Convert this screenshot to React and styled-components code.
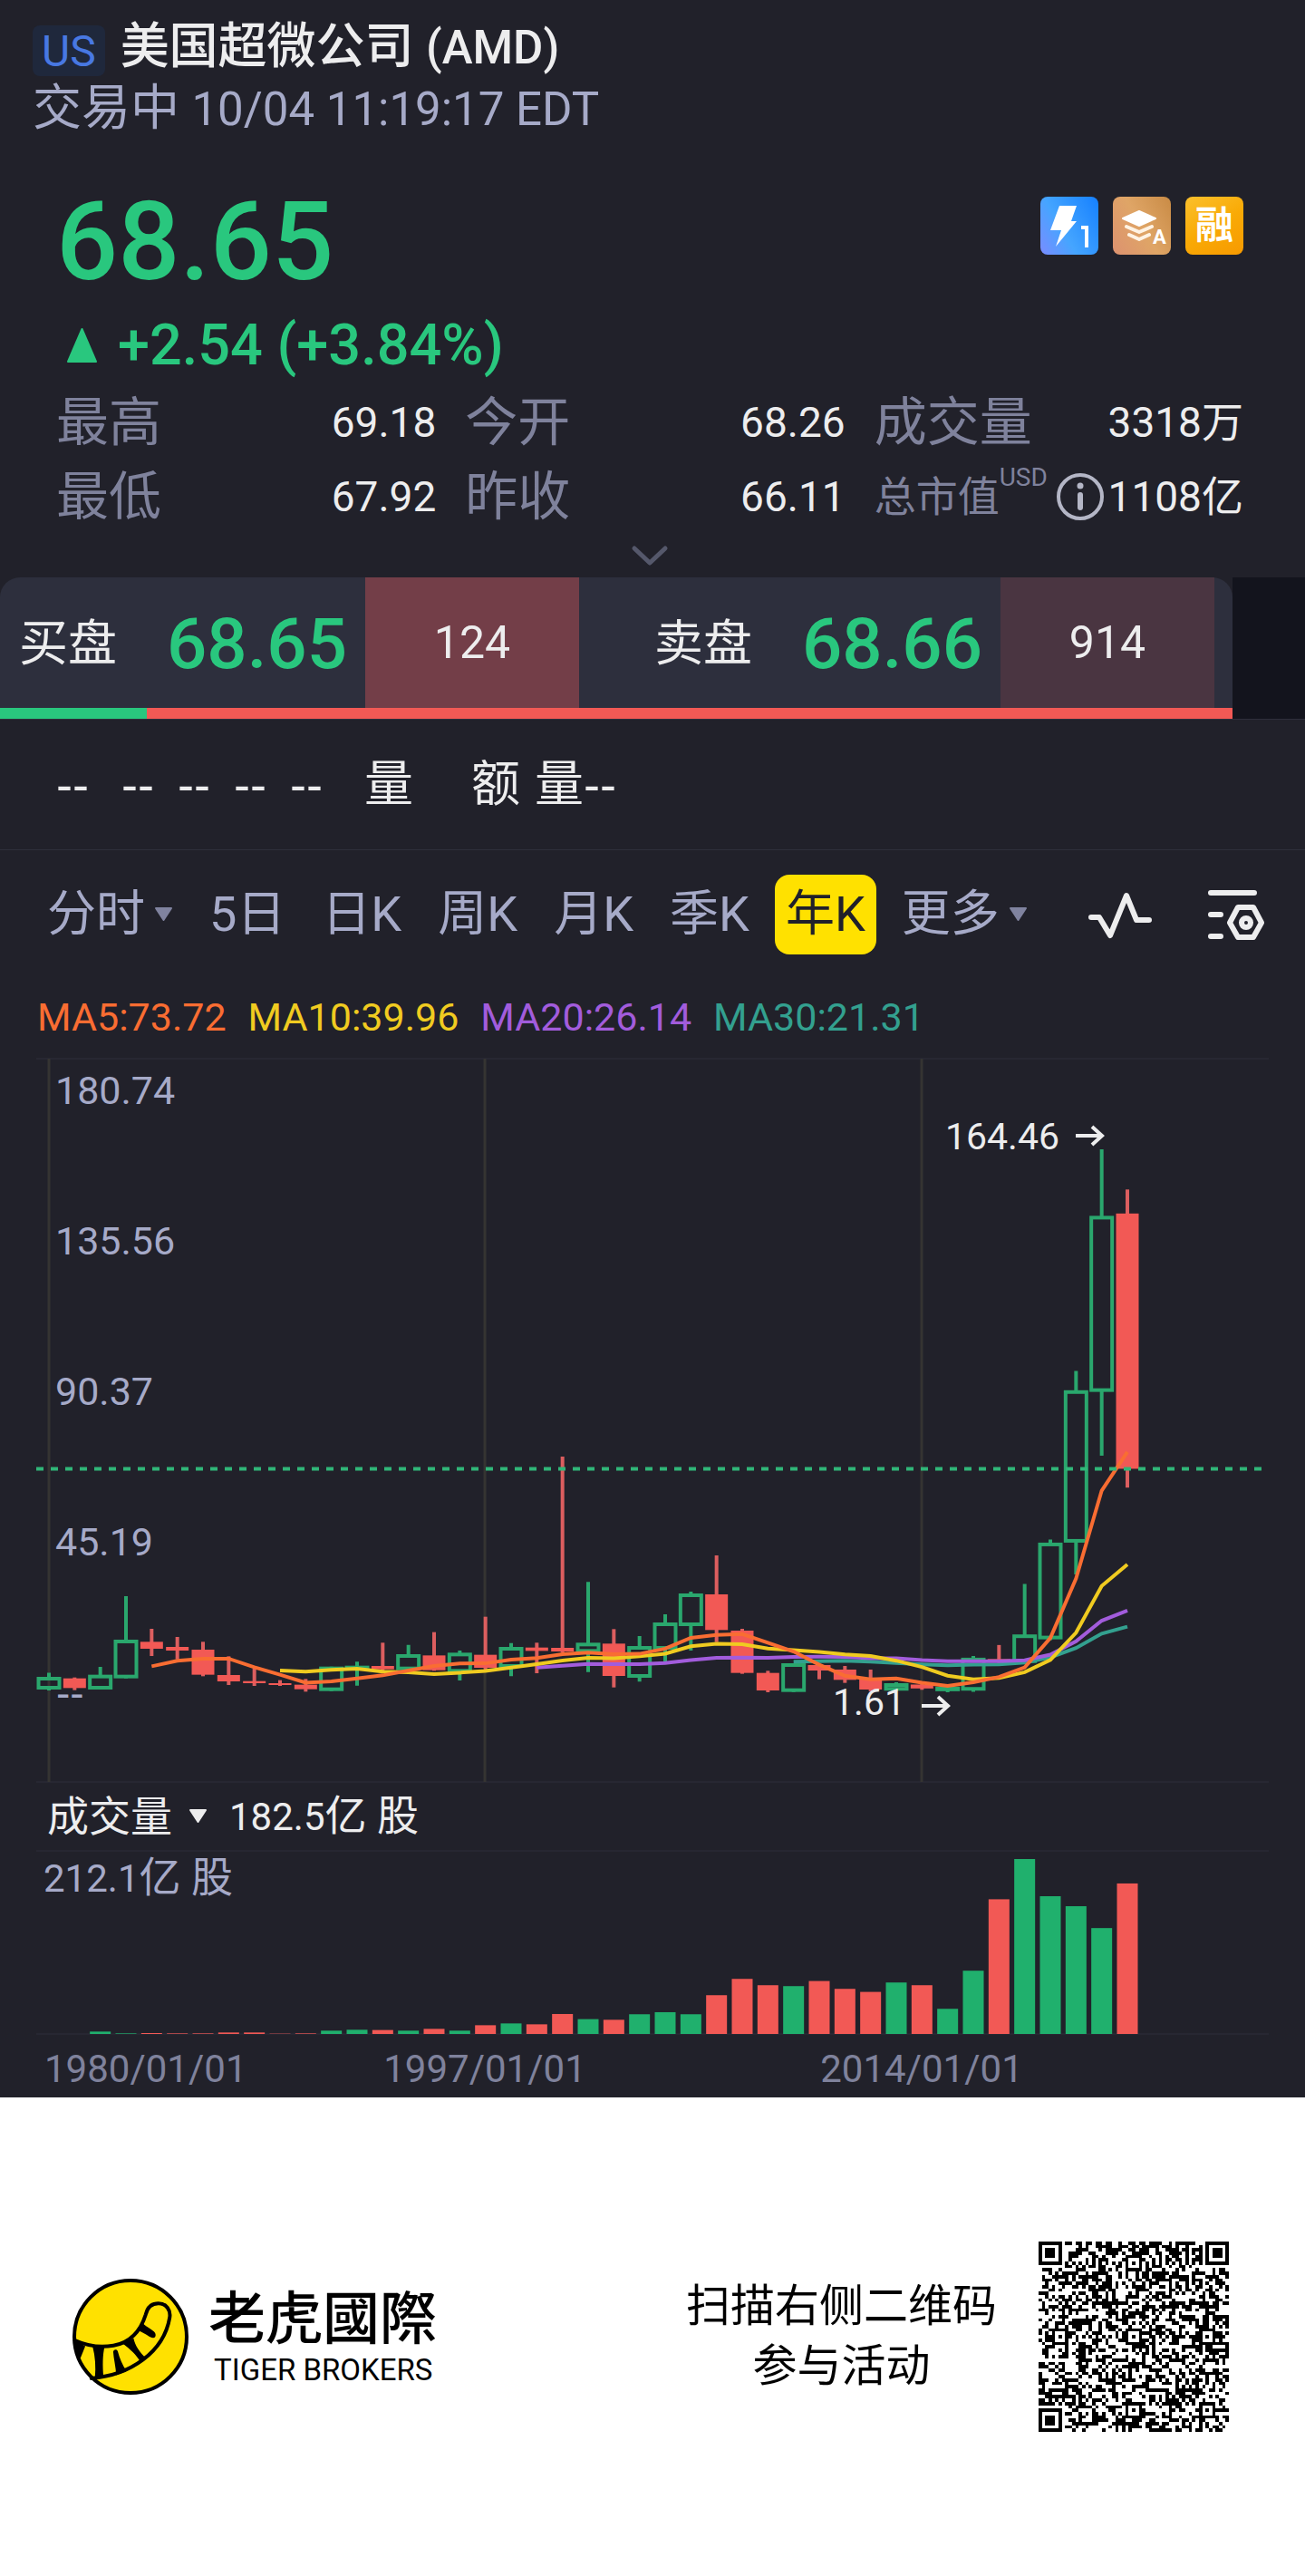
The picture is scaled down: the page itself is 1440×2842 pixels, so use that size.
import React, { useState } from "react";
import styled, { createGlobalStyle } from "styled-components";

const colors = {
  background: "#21212a",
  panel: "#2d2f3d",
  void: "#13141d",
  line: "#2e2f3b",
  grid: "#353432",
  text: "#ededee",
  muted: "#a6aac8",
  label: "#7f829c",
  up: "#29c77e",
  candleUp: "#2aa76d",
  volumeUp: "#20b06d",
  down: "#f25955",
  yellow: "#ffe100",
  ma5: "#f96d32",
  ma10: "#f0cb20",
  ma20: "#a25cdc",
  ma30: "#33a08f",
};

const fontStack = `Roboto, "Noto Sans CJK SC", sans-serif`;

const GlobalStyle = createGlobalStyle`
  *, *::before, *::after {
    box-sizing: border-box;
  }
  body {
    margin: 0;
    background: #fff;
    font-family: ${fontStack};
  }
  button {
    margin: 0;
    padding: 0;
    border: 0;
    background: none;
    color: inherit;
    font: inherit;
    cursor: pointer;
  }
  svg {
    display: block;
  }
`;

const Screen = styled.main`
  background: ${colors.background};
  color: ${colors.text};
`;

/* ---------- header ---------- */

const Header = styled.header`
  padding: 16px 36px 0;
`;

const TitleRow = styled.div`
  display: flex;
  align-items: center;
  gap: 17px;
  height: 72px;
`;

const Market = styled.span`
  padding: 2px 10px 0;
  margin-top: 8px;
  border-radius: 8px;
  background: #1f283c;
  color: #4878e2;
  font-size: 48px;
  line-height: 54px;
`;

const Title = styled.h1`
  margin: 0;
  font-size: 54px;
  font-weight: 500;
  line-height: 72px;
`;

const Latin = styled.span`
  font-size: 51px;
`;

const Session = styled.p`
  margin: 0;
  color: ${colors.muted};
  font-size: 54px;
  line-height: 64px;
`;

/* ---------- quote ---------- */

const Quote = styled.section`
  padding: 54px 68px 0 62px;
`;

const PriceRow = styled.div`
  display: flex;
  justify-content: space-between;
  align-items: flex-start;
  color: ${colors.up};
`;

const Price = styled.strong`
  font-size: 120px;
  font-weight: 500;
  line-height: 120px;
`;

const Chips = styled.div`
  display: flex;
  gap: 16px;
  padding-top: 10px;
`;

const Chip = styled.span`
  display: flex;
  align-items: center;
  justify-content: center;
  width: 64px;
  height: 64px;
  border-radius: 8px;
  background: ${(props) => props.$fill};
  color: #fff;
  font-size: 42px;
  font-weight: 700;
  line-height: 64px;
`;

const Change = styled.p`
  display: flex;
  align-items: center;
  gap: 22px;
  margin: 18px 0 8px;
  padding-left: 11px;
  color: ${colors.up};
  font-size: 63px;
  font-weight: 500;
  line-height: 72px;
`;

const Stats = styled.dl`
  display: grid;
  grid-template-columns: 420fr 420fr 408fr;
  column-gap: 32px;
  margin: 0;
`;

const Stat = styled.div`
  display: flex;
  justify-content: space-between;
  line-height: 82px;
  white-space: nowrap;
`;

const StatLabel = styled.dt`
  display: flex;
  color: ${colors.label};
  font-size: ${(props) => (props.$small ? 46 : 58)}px;
`;

const Unit = styled.sup`
  font-size: 28px;
  line-height: 40px;
`;

const StatValue = styled.dd`
  display: flex;
  align-items: center;
  gap: 4px;
  margin: 0;
  font-size: 46px;
`;

const Expand = styled.button`
  display: block;
  width: 100%;
  padding: 12px 0;
  svg {
    margin: 0 auto;
  }
`;

/* ---------- bid / ask ---------- */

const Depth = styled.section`
  display: flex;
  background: ${colors.void};
  border-bottom: 1px solid ${colors.line};
`;

const DepthMain = styled.div`
  flex: 1;
  background: ${colors.background};
`;

const DepthEnd = styled.div`
  width: 80px;
`;

const DepthRow = styled.div`
  display: flex;
  gap: 62px;
  padding-right: 20px;
  border-radius: 22px 22px 0 0;
  background: ${colors.panel};
`;

const Side = styled.div`
  display: flex;
  flex: 1;
  justify-content: space-between;
  height: 144px;
  padding-left: 21px;
  font-size: 54px;
  line-height: 148px;
`;

const SidePrice = styled.span`
  margin-left: auto;
  padding-right: 20px;
  color: ${colors.up};
  font-size: 78px;
  font-weight: 500;
`;

const SideSize = styled.span`
  width: 236px;
  background: ${(props) => props.$fill};
  font-size: 50px;
  line-height: 144px;
  text-align: center;
`;

const Ratio = styled.div`
  height: 12px;
  background: ${colors.down};
`;

const RatioBid = styled.div`
  height: 12px;
  background: ${colors.up};
`;

const Summary = styled.section`
  display: flex;
  align-items: center;
  padding: 0 62px;
  border-bottom: 1px solid ${colors.line};
  font-size: 54px;
  line-height: 143px;
`;

const Dash = styled.span`
  min-width: 40px;
  font-family: "Liberation Sans", sans-serif;
`;

const DashGroup = styled.span`
  display: flex;
  gap: 22px;
  padding: 0 42px 0 32px;
`;

const Word = styled.span`
  padding-right: ${(props) => props.$gap || 0}px;
`;

/* ---------- toolbar ---------- */

const Toolbar = styled.nav`
  display: flex;
  align-items: center;
  gap: 16px;
  padding: 27px 44px 24px 40px;
  color: ${colors.muted};
`;

const Tab = styled.button`
  display: flex;
  align-items: center;
  gap: 10px;
  padding: 0 12px;
  border-radius: 16px;
  background: ${(props) => (props.$active ? colors.yellow : "none")};
  color: ${(props) => (props.$active ? "#20202a" : colors.muted)};
  font-size: 54px;
  line-height: 88px;
  white-space: nowrap;
`;

const Tools = styled.div`
  display: flex;
  gap: 60px;
  margin-left: auto;
`;

/* ---------- charts ---------- */

const Averages = styled.div`
  display: flex;
  gap: 24px;
  padding-left: 41px;
  font-size: 43px;
  line-height: 90px;
`;

const Average = styled.span`
  color: ${(props) => props.$color};
`;

const Chart = styled.svg`
  width: 100%;
  height: auto;
  font-family: ${fontStack};
  font-size: 43px;
`;

const VolumeHead = styled.div`
  display: flex;
  align-items: center;
  gap: 24px;
  padding-left: 52px;
  font-size: 46px;
  line-height: 72px;
`;

const VolumePick = styled.button`
  display: flex;
  align-items: center;
  gap: 18px;
`;

const Small = styled.span`
  font-size: 42px;
`;

/* ---------- footer ---------- */

const Footer = styled.footer`
  display: flex;
  align-items: center;
  justify-content: space-between;
  padding: 159px 84px 160px 80px;
  background: #fff;
  color: #000;
`;

const Brand = styled.div`
  display: flex;
  align-items: center;
  gap: 22px;
`;

const BrandText = styled.div`
  display: flex;
  flex-direction: column;
  gap: 2px;
  padding-top: 6px;
`;

const BrandName = styled.div`
  font-family: Roboto, "Noto Sans CJK TC", sans-serif;
  font-size: 63px;
  font-weight: 500;
  line-height: 66px;
`;

const BrandLatin = styled.div`
  padding-left: 6px;
  font-size: 33px;
  line-height: 42px;
`;

const Invite = styled.div`
  display: flex;
  align-items: center;
  gap: 46px;
`;

const InviteText = styled.p`
  margin: 0;
  font-size: 49px;
  line-height: 66px;
  text-align: center;
`;

/* ---------- data ---------- */

// [direction, body top, body bottom, high, low, volume]
const candles = [
  ["up", 6.25, 2.45, 7.5, 2.17, 0],
  ["down", 5.8, 2.9, 6.07, 2.27, 0],
  ["up", 6.89, 2.45, 9.24, 2.45, 2.9],
  ["up", 17.4, 5.8, 30.44, 5.8, 0.7],
  ["down", 16.76, 14.68, 20.66, 12.5, 1.1],
  ["down", 15.22, 14.13, 18.21, 11.5, 0.7],
  ["down", 14.4, 6.89, 16.76, 6.43, 0.7],
  ["down", 6.8, 4.89, 12.41, 3.81, 1.8],
  ["down", 4.98, 4.35, 8.79, 3.53, 1.8],
  ["down", 4.35, 3.81, 5.26, 3.53, 0.4],
  ["down", 3.9, 2.54, 5.62, 1.81, 0.7],
  ["up", 9.33, 1.99, 9.33, 1.99, 4],
  ["up", 9.6, 8.6, 10.78, 3.62, 5.1],
  ["down", 9.51, 8.52, 16.49, 8.06, 4.8],
  ["up", 13.05, 8.24, 15.86, 8.06, 4],
  ["down", 12.68, 8.24, 19.66, 8.06, 6.2],
  ["up", 13.5, 7.52, 14.13, 5.16, 4],
  ["down", 12.87, 8.97, 24.28, 8.06, 10.6],
  ["up", 15.22, 8.97, 16.4, 6.43, 12.8],
  ["down", 15.04, 14.04, 16.49, 7.34, 11.7],
  ["down", 14.95, 13.86, 72.3, 13.5, 24.2],
  ["up", 16.49, 13.5, 34.7, 7.7, 18],
  ["down", 16.22, 6.52, 20.57, 3.08, 17.2],
  ["up", 15.49, 5.98, 18.48, 4.8, 23.9],
  ["up", 22.56, 14.4, 25, 10.33, 26.4],
  ["up", 31.26, 21.47, 31.8, 14.13, 23.9],
  ["down", 30.99, 20.3, 42.67, 16.67, 47],
  ["down", 20.11, 7.43, 20.66, 7.16, 66.8],
  ["down", 7.43, 2.17, 8.06, 1.63, 59.1],
  ["up", 10.33, 1.72, 10.33, 1.72, 58],
  ["down", 9.79, 8.15, 9.79, 5.53, 64.2],
  ["down", 8.43, 5.35, 9.51, 4.44, 54.7],
  ["down", 5.8, 2.45, 8.43, 1.9, 51],
  ["up", 4.35, 2.11, 4.6, 1.98, 62.4],
  ["down", 3.95, 2.77, 4.1, 2.37, 59.1],
  ["up", 3.3, 2.3, 4.08, 1.61, 30.5],
  ["up", 11.99, 2.11, 12.5, 1.75, 76.7],
  ["down", 11.6, 10.67, 15.8, 10.4, 163.3],
  ["up", 18.97, 10.41, 34.12, 10.41, 212.1],
  ["up", 46.5, 17.5, 47.4, 17.26, 167],
  ["up", 92.2, 46.5, 98, 37, 154.9],
  ["up", 144.5, 91.7, 164.46, 72.6, 128.4],
  ["down", 145.2, 68.65, 152.4, 63, 182.5],
];

const averages = [
  {
    name: "MA30",
    value: "21.31",
    color: colors.ma30,
    points: [10.8, 10.95, 11.05, 10.8, 10.4, 10, 9.75, 9.9, 10, 10.5, 12.1, 14.9, 19.2, 21.31],
  },
  {
    name: "MA20",
    value: "26.14",
    color: colors.ma20,
    points: [
      9.05, 9.6, 10.15, 10.05, 10.05, 10.4, 11.25, 11.95, 12.05, 11.95, 12.25, 12.3, 12.25, 11.85,
      11.85, 11.3, 10.95, 10.95, 10.95, 11.2, 12.9, 16.9, 23.1, 26.14,
    ],
  },
  {
    name: "MA10",
    value: "39.96",
    color: colors.ma10,
    points: [
      8.15, 7.8, 8.35, 8.7, 7.8, 7.6, 7.05, 7.5, 8, 9.05, 10.05, 11.15, 11.95, 11.8, 12.4, 13.2,
      15.4, 16.2, 16.05, 14.75, 14.3, 13.7, 12.95, 12.5, 11.1, 9.2, 6.6, 5.5, 5.9, 7.65, 11.3,
      19.5, 33.5, 39.96,
    ],
  },
  {
    name: "MA5",
    value: "73.72",
    color: colors.ma5,
    points: [
      9.4, 11.05, 11.7, 11.7, 9.15, 6.9, 4.5, 4.9, 5.8, 6.7, 8.15, 9.5, 10.25, 10.3, 11.4, 11.9,
      13.05, 13.5, 13.05, 13.15, 14.7, 17.95, 18.85, 19.1, 16.5, 13.85, 9.9, 6.6, 5.5, 5.8, 4.5,
      3.55, 4.6, 6.2, 9.1, 17.9, 35.7, 62.1, 73.72,
    ],
  },
];

const priceLabels = ["180.74", "135.56", "90.37", "45.19"];

const stats = [
  { label: "最高", value: "69.18" },
  { label: "今开", value: "68.26" },
  { label: "成交量", value: "3318万" },
  { label: "最低", value: "67.92" },
  { label: "昨收", value: "66.11" },
  { label: "总市值", value: "1108亿", unit: "USD" },
];

const tabs = [
  { label: "分时", menu: true },
  { label: "5日" },
  { label: "日K" },
  { label: "周K" },
  { label: "月K" },
  { label: "季K" },
  { label: "年K" },
  { label: "更多", menu: true },
];

const candleX = (index) => 54 + (index * 1190) / 42;
const priceY = (price) => 706 - price * 3.679;

/* ---------- icons ---------- */

const Caret = ({ color }) => (
  <svg width="21" height="16" viewBox="0 0 21 16" aria-hidden="true">
    <path d="M2 1h17l-8.500 13z" fill={color} stroke={color} strokeWidth="2" strokeLinejoin="round" />
  </svg>
);

const UpIcon = () => (
  <svg width="35" height="40" viewBox="0 0 35 40" aria-hidden="true">
    <path d="M17.500 2L33 38H2z" fill={colors.up} stroke={colors.up} strokeWidth="2" strokeLinejoin="round" />
  </svg>
);

const InfoIcon = () => (
  <svg width="54" height="54" viewBox="0 0 54 54" aria-hidden="true">
    <circle cx="27" cy="27" r="24" fill="none" stroke="#b4b6c6" strokeWidth="4" />
    <circle cx="27" cy="15" r="3.500" fill="#b4b6c6" />
    <path d="M27 25v14" stroke="#b4b6c6" strokeWidth="6" strokeLinecap="round" />
  </svg>
);

const BoltIcon = () => (
  <svg width="64" height="64" viewBox="0 0 64 64" aria-hidden="true">
    <path d="M21 10h19l-6 17h6L17 55l6-18H11z" fill="#fff" />
    <path d="M45 34h6v22" fill="none" stroke="#fff" strokeWidth="4" />
  </svg>
);

const LayersIcon = () => (
  <svg width="64" height="64" viewBox="0 0 64 64" aria-hidden="true">
    <path d="M29 16l18 8-18 8-18-8z" fill="#fff" stroke="#fff" strokeWidth="2" strokeLinejoin="round" />
    <path d="M15 33l14 6 14-6M18 42l11 5 11-5" fill="none" stroke="#fff3e4" strokeWidth="4" strokeLinecap="round" strokeLinejoin="round" />
    <text x="44" y="52" fill="#fff" fontSize="22" fontWeight="700">
      A
    </text>
  </svg>
);

const WaveIcon = () => (
  <svg width="72" height="60" viewBox="0 0 72 60" aria-hidden="true">
    <path
      d="M4 33h9l12 20L43 9l11 27h14"
      fill="none"
      stroke={colors.text}
      strokeWidth="6"
      strokeLinecap="round"
      strokeLinejoin="round"
    />
  </svg>
);

const SettingsIcon = () => (
  <svg width="64" height="60" viewBox="0 0 64 60" aria-hidden="true">
    <g fill="none" stroke={colors.text} strokeWidth="6" strokeLinecap="round" strokeLinejoin="round">
      <path d="M4 6h48M4 30h11M4 54h11" />
      <path d="M34 22h17l9 17-9 16H34l-9-16z" />
      <circle cx="43" cy="39" r="5" />
    </g>
  </svg>
);

const TigerLogo = () => (
  <svg width="128" height="128" viewBox="0 0 382 382" role="img" aria-label="Tiger Brokers">
    <circle cx="191" cy="191" r="185" fill={colors.yellow} stroke="#000" strokeWidth="12" />
    <path
      d="M8 203C50 222 95 227 135 220C190 210 224 172 241 118C247 92 264 81 283 81C309 81 324 104 320 128C311 182 281 230 232 267C180 306 128 323 62 328"
      fill="none"
      stroke="#000"
      strokeWidth="12"
      strokeLinecap="round"
    />
    <path d="M8 202L42 222L26 262L14 250z" />
    <path d="M66 222H106C99 250 99 285 102 322L74 326C77 290 75 255 66 222z" />
    <path d="M134 240C137 232 146 232 149 239C155 262 164 284 178 304L144 318C143 290 135 262 134 240z" />
    <path d="M166 214L201 196C206 220 222 244 243 262L224 274C210 250 190 232 166 214z" />
    <path d="M224 158L232 148C246 160 258 166 268 174C276 181 276 194 266 195C256 196 244 182 216 171z" />
  </svg>
);

/* ---------- QR code ---------- */

const QR_SIZE = 57;

const ringAt = (x, y, cx, cy) => Math.max(Math.abs(x - cx), Math.abs(y - cy));

const buildQr = () => {
  const finders = [
    [3, 3],
    [QR_SIZE - 4, 3],
    [3, QR_SIZE - 4],
  ];
  const marks = [
    [28, 6],
    [6, 28],
    [28, 28],
    [50, 28],
    [28, 50],
    [50, 50],
  ];
  let seed = 20221;
  let path = "";
  for (let y = 0; y < QR_SIZE; y++) {
    for (let x = 0; x < QR_SIZE; x++) {
      seed = (seed * 1103515245 + 12345) % 2147483648;
      let dark = (seed >> 16) % 2 === 0;
      if (x === 6 || y === 6) dark = (x + y) % 2 === 0;
      marks.forEach(([cx, cy]) => {
        const ring = ringAt(x, y, cx, cy);
        if (ring <= 2) dark = ring !== 1;
      });
      finders.forEach(([cx, cy]) => {
        const ring = ringAt(x, y, cx, cy);
        if (ring <= 4) dark = ring !== 4 && ring !== 2;
      });
      if (dark) path += `M${x} ${y}h1v1h-1z`;
    }
  }
  return path;
};

const qrPath = buildQr();

const QrCode = () => (
  <svg
    width="210"
    height="210"
    viewBox={`0 0 ${QR_SIZE} ${QR_SIZE}`}
    shapeRendering="crispEdges"
    role="img"
    aria-label="二维码"
  >
    <path d={qrPath} />
  </svg>
);

/* ---------- chart parts ---------- */

const Candle = ({ index, candle }) => {
  const [direction, top, bottom, high, low] = candle;
  const x = candleX(index);
  const yTop = priceY(top);
  const height = Math.max(priceY(bottom) - yTop, 2);
  if (direction === "down") {
    return (
      <g fill={colors.down}>
        <rect x={x - 2} y={priceY(high)} width="4" height={priceY(low) - priceY(high)} fill="#dc5e5f" />
        <rect x={x - 12.5} y={yTop} width="25" height={height} />
      </g>
    );
  }
  return (
    <g fill="none" stroke={colors.candleUp} strokeWidth="4">
      <path d={`M${x} ${priceY(high)}V${yTop + 2}M${x} ${yTop + height - 2}V${priceY(low)}`} />
      <rect x={x - 11.5} y={yTop + 2} width="23" height={Math.max(height - 4, 1)} />
    </g>
  );
};

const AverageLine = ({ points, color }) => {
  const first = candles.length - points.length;
  const line = points.map((price, i) => `${candleX(first + i)},${priceY(price)}`).join(" ");
  return <polyline points={line} fill="none" stroke={color} strokeWidth="4" />;
};

const Callout = ({ x, y, arrowY, children }) => (
  <g>
    <text x={x - 18} y={y} textAnchor="end" fontSize="41" fill={colors.text}>
      {children}
    </text>
    <path d={`M${x} ${arrowY}h29m-11 -10l11 10l-11 10`} fill="none" stroke={colors.text} strokeWidth="4" />
  </g>
);

const PriceChart = () => (
  <Chart viewBox="0 0 1440 800" role="img" aria-label="年K">
    <path d="M40 1H1400M40 799H1400" stroke={colors.line} strokeWidth="1" />
    <path d="M54 1V799M535 1V799M1017 1V799" stroke={colors.grid} strokeWidth="3" />
    {priceLabels.map((label, i) => (
      <text key={label} x="61" y={51 + i * 166} fill={colors.muted}>
        {label}
      </text>
    ))}
    <text x="62" y="717" fill={colors.muted} fontFamily="Liberation Sans" fontSize="46">
      --
    </text>
    {candles.map((candle, i) => (
      <Candle key={i} index={i} candle={candle} />
    ))}
    {averages.map((average) => (
      <AverageLine key={average.name} points={average.points} color={average.color} />
    ))}
    <path d={`M40 ${priceY(68.65)}H1400`} stroke="#30b678" strokeWidth="4" strokeDasharray="8 8" />
    <Callout x={1187} y={101} arrowY={86}>
      164.46
    </Callout>
    <Callout x={1017} y={725} arrowY={715}>
      1.61
    </Callout>
  </Chart>
);

const VolumeChart = () => (
  <Chart viewBox="0 0 1440 273" role="img" aria-label="成交量">
    <path d="M40 1H1400M40 203H1400" stroke={colors.line} strokeWidth="1" />
    <text x="48" y="46" fill={colors.muted} fontSize="42">
      212.1<tspan fontSize="46">亿 股</tspan>
    </text>
    {candles.map(([direction, , , , , volume], i) => (
      <rect
        key={i}
        x={candleX(i) - 11.5}
        y={203 - volume * 0.91}
        width="23"
        height={volume * 0.91}
        fill={direction === "up" ? colors.volumeUp : colors.down}
      />
    ))}
    <g fill={colors.label} fontSize="42">
      <text x="49" y="256">
        1980/01/01
      </text>
      <text x="535" y="256" textAnchor="middle">
        1997/01/01
      </text>
      <text x="1017" y="256" textAnchor="middle">
        2014/01/01
      </text>
    </g>
  </Chart>
);

const App = () => {
  const [period, setPeriod] = useState("年K");

  return (
    <>
      <GlobalStyle />
      <Screen>
        <Header>
          <TitleRow>
            <Market>US</Market>
            <Title>
              美国超微公司 <Latin>(AMD)</Latin>
            </Title>
          </TitleRow>
          <Session>
            交易中 <Latin>10/04 11:19:17 EDT</Latin>
          </Session>
        </Header>

        <Quote>
          <PriceRow>
            <Price>68.65</Price>
            <Chips>
              <Chip $fill="linear-gradient(60deg, #7a8cff 0%, #45a5ff 40%, #1580ff 100%)">
                <BoltIcon />
              </Chip>
              <Chip $fill="linear-gradient(60deg, #dd9270 0%, #dfa566 50%, #c98b45 100%)">
                <LayersIcon />
              </Chip>
              <Chip $fill="linear-gradient(150deg, #fbc02c 0%, #f9aa06 50%, #f79a00 100%)">融</Chip>
            </Chips>
          </PriceRow>
          <Change>
            <UpIcon />
            +2.54 (+3.84%)
          </Change>
          <Stats>
            {stats.map((stat) => (
              <Stat key={stat.label}>
                <StatLabel $small={Boolean(stat.unit)}>
                  {stat.label}
                  {stat.unit && <Unit>{stat.unit}</Unit>}
                </StatLabel>
                <StatValue>
                  {stat.unit && <InfoIcon />}
                  {stat.value}
                </StatValue>
              </Stat>
            ))}
          </Stats>
          <Expand aria-label="展开">
            <svg width="42" height="24" viewBox="0 0 42 24" aria-hidden="true">
              <path d="M4 4l17 16L38 4" fill="none" stroke="#55586b" strokeWidth="5" strokeLinecap="round" strokeLinejoin="round" />
            </svg>
          </Expand>
        </Quote>

        <Depth>
          <DepthMain>
            <DepthRow>
              <Side>
                买盘
                <SidePrice>68.65</SidePrice>
                <SideSize $fill="#733e48">124</SideSize>
              </Side>
              <Side>
                卖盘
                <SidePrice>68.66</SidePrice>
                <SideSize $fill="#4a3541">914</SideSize>
              </Side>
            </DepthRow>
            <Ratio>
              <RatioBid style={{ width: `${(124 / (124 + 914)) * 100}%` }} />
            </Ratio>
          </DepthMain>
          <DepthEnd />
        </Depth>

        <Summary>
          <Dash>--</Dash>
          <DashGroup>
            <Dash>--</Dash>
            <Dash>--</Dash>
            <Dash>--</Dash>
            <Dash>--</Dash>
          </DashGroup>
          <Word $gap={64}>量</Word>
          <Word $gap={16}>额</Word>
          <Word>量</Word>
          <Dash>--</Dash>
        </Summary>

        <Toolbar>
          {tabs.map((tab) => (
            <Tab key={tab.label} $active={tab.label === period} onClick={() => setPeriod(tab.label)}>
              {tab.label}
              {tab.menu && <Caret color="#80839f" />}
            </Tab>
          ))}
          <Tools>
            <button aria-label="指标">
              <WaveIcon />
            </button>
            <button aria-label="设置">
              <SettingsIcon />
            </button>
          </Tools>
        </Toolbar>

        <Averages>
          {[...averages].reverse().map((average) => (
            <Average key={average.name} $color={average.color}>
              {average.name}:{average.value}
            </Average>
          ))}
        </Averages>
        <PriceChart />
        <VolumeHead>
          <VolumePick>
            成交量
            <Caret color={colors.text} />
          </VolumePick>
          <span>
            <Small>182.5</Small>亿 股
          </span>
        </VolumeHead>
        <VolumeChart />
      </Screen>

      <Footer>
        <Brand>
          <TigerLogo />
          <BrandText>
            <BrandName>老虎國際</BrandName>
            <BrandLatin>TIGER BROKERS</BrandLatin>
          </BrandText>
        </Brand>
        <Invite>
          <InviteText>
            扫描右侧二维码
            <br />
            参与活动
          </InviteText>
          <QrCode />
        </Invite>
      </Footer>
    </>
  );
};

export default App;
